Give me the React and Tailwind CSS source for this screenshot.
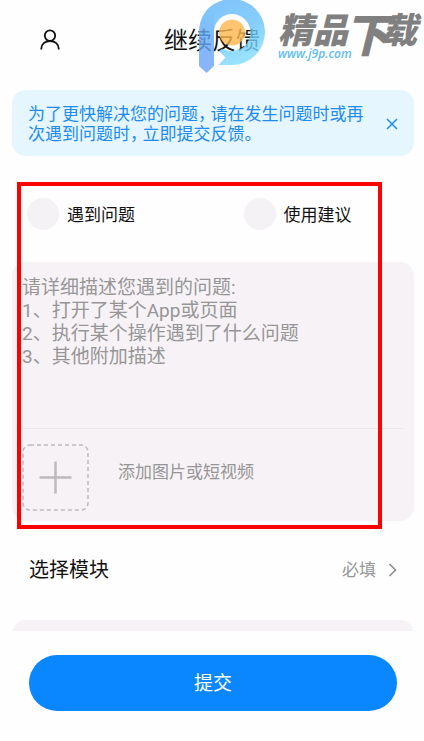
import React from "react";

function UserIcon() {
  return (
    <svg width="20" height="22" viewBox="0 0 20 22" fill="none" stroke="#111" strokeWidth="1.8" aria-hidden="true">
      <circle cx="10" cy="6.6" r="5.2" />
      <path d="M1.3 20.5 V19.6 C1.3 15.2 5 12 10 12 C15 12 18.7 15.2 18.7 19.6 V20.5" />
    </svg>
  );
}

function Watermark() {
  return (
    <div className="pointer-events-none absolute top-0 right-0 flex">
      <svg className="opacity-80" width="68" height="74" viewBox="198 0 68 74" aria-hidden="true">
        <defs>
          <linearGradient id="stem" x1="0" y1="0" x2="0" y2="1">
            <stop offset="0" stopColor="#5fbcfb" />
            <stop offset="0.5" stopColor="#62a9fb" />
            <stop offset="1" stopColor="#6ea2f8" />
          </linearGradient>
          <linearGradient id="ring" x1="0" y1="0" x2="0.3" y2="1">
            <stop offset="0" stopColor="#62b4fa" />
            <stop offset="0.55" stopColor="#68c3fc" />
            <stop offset="1" stopColor="#80dcff" />
          </linearGradient>
        </defs>
        <path fill="url(#stem)" d="M199 66 V32 C199 20 205 9 214 4 V66 L206.5 73 Z" />
        <path
          fill="url(#ring)"
          d="M213.500 4.300 C219.500 1 225 -1 232 -1 A33 33 0 0 1 232 65 H218.500 L225.500 57.500 L219 51 L222 48.500 C225 50 228 51 232 51 A18.500 18.500 0 0 0 232 14 C222 14 214 22 214 32 Z"
        />
        <circle cx="232" cy="32.500" r="13" fill="#fdb84e" />
      </svg>
      <div className="w-[158px] pt-2 pl-3 italic">
        <div className="flex h-10 items-start font-['Noto_Sans_CJK_SC',sans-serif] text-[35px] leading-10 font-black text-[#808080]">
          <span>精品</span>
          <span className="-ml-1 text-[46px] leading-12">下</span>
          <span className="-ml-2">载</span>
        </div>
        <div className="font-['Open_Sans',sans-serif] text-xs leading-3 font-semibold text-[#62bdf3]">www.j9p.com</div>
      </div>
    </div>
  );
}

function Comma() {
  return <span className="mr-1 [font-feature-settings:'halt']">，</span>;
}

function Choice({ id, children }) {
  return (
    <div className="flex items-center gap-2">
      <input id={id} type="radio" name="kind" className="size-8 appearance-none rounded-full bg-[#f4f2f4] checked:bg-[#0a84ff]" />
      <label htmlFor={id} className="pt-0.5 text-[17px] leading-6 text-[#111]">{children}</label>
    </div>
  );
}

export default function App() {
  return (
    <main className="relative min-h-screen bg-[#fefefe] font-[Roboto,'Noto_Sans_CJK_SC',sans-serif]">
      <header className="grid h-20 grid-cols-[1fr_auto_1fr] items-center px-10">
        <button type="button" aria-label="个人中心" className="justify-self-start"><UserIcon /></button>
        <h1 className="pt-0.5 text-2xl text-[#111]">继续反馈</h1>
      </header>
      <Watermark />

      <aside className="mt-[10px] mr-[10px] ml-3 flex items-center justify-between rounded-[14px] bg-[#e5f6ff] pt-[14px] pb-3 pr-4 pl-4 text-[#1e8bf0]">
        <p className="pr-5 text-[17px] leading-5">
          为了更快解决您的问题<Comma />请在发生问题时或再次遇到问题时<Comma />立即提交反馈。
        </p>
        <button type="button" aria-label="关闭" className="shrink-0">
          <svg width="12" height="12" viewBox="0 0 12 12" stroke="currentColor" strokeWidth="1.5" aria-hidden="true">
            <path d="M1 1 L11 11 M11 1 L1 11" />
          </svg>
        </button>
      </aside>

      <section className="relative mt-[26px] pb-2">
        <div className="grid h-20 grid-cols-[6fr_5fr] pb-4 pl-[27px]">
          <Choice id="problem">遇到问题</Choice>
          <Choice id="advice">使用建议</Choice>
        </div>
        <div className="mr-[10px] ml-3 rounded-[14px] bg-[#f6f2f6] px-[10px] pt-[14px] pb-[10px]">
          <textarea
            aria-label="问题描述"
            className="block h-[152px] w-full resize-none bg-transparent text-[19px] leading-[23px] outline-none placeholder:text-[#969696]"
            placeholder={"请详细描述您遇到的问题:\n1、打开了某个App或页面\n2、执行某个操作遇到了什么问题\n3、其他附加描述"}
          />
          <div className="flex items-center border-t border-[#ebe8eb] pt-[15px]">
            <button type="button" id="add-media" aria-label="添加" className="size-[67px]">
              <svg width="67" height="67" viewBox="0 0 67 67" fill="none" stroke="#bdbabd" aria-hidden="true">
                <rect x="1" y="1" width="65" height="65" rx="7" strokeWidth="1.5" strokeDasharray="4 3" />
                <path d="M33.500 17.500 V49.500 M17.500 33.500 H49.500" strokeWidth="2.500" />
              </svg>
            </button>
            <label htmlFor="add-media" className="pb-3 pl-[29px] text-[17px] leading-6 text-[#969696]">添加图片或短视频</label>
          </div>
        </div>
        <div className="pointer-events-none absolute inset-y-0 right-[42px] left-[17px] border-4 border-[#ff0000]" />
      </section>

      <button type="button" className="flex h-20 w-full items-center pt-0.5 pr-[27px] pl-[29px]">
        <span className="flex-1 text-left text-xl text-[#111]">选择模块</span>
        <span className="pt-0.5 text-[17px] text-[#969696]">必填</span>
        <svg className="ml-3" width="9" height="14" viewBox="0 0 9 14" fill="none" stroke="#8c8c8c" strokeWidth="1.6" aria-hidden="true">
          <path d="M1.500 1 L7.500 7 L1.500 13" />
        </svg>
      </button>

      <div className="mt-[11px] mr-[10px] ml-3 h-[11px] overflow-hidden">
        <div className="h-10 rounded-[14px] bg-[#f6f2f6]" />
      </div>

      <footer className="pt-6 pr-[27px] pb-[30px] pl-[29px]">
        <button type="submit" className="h-14 w-full rounded-full bg-[#0a86ff] pt-0.5 text-[19px] text-white">提交</button>
      </footer>
    </main>
  );
}
